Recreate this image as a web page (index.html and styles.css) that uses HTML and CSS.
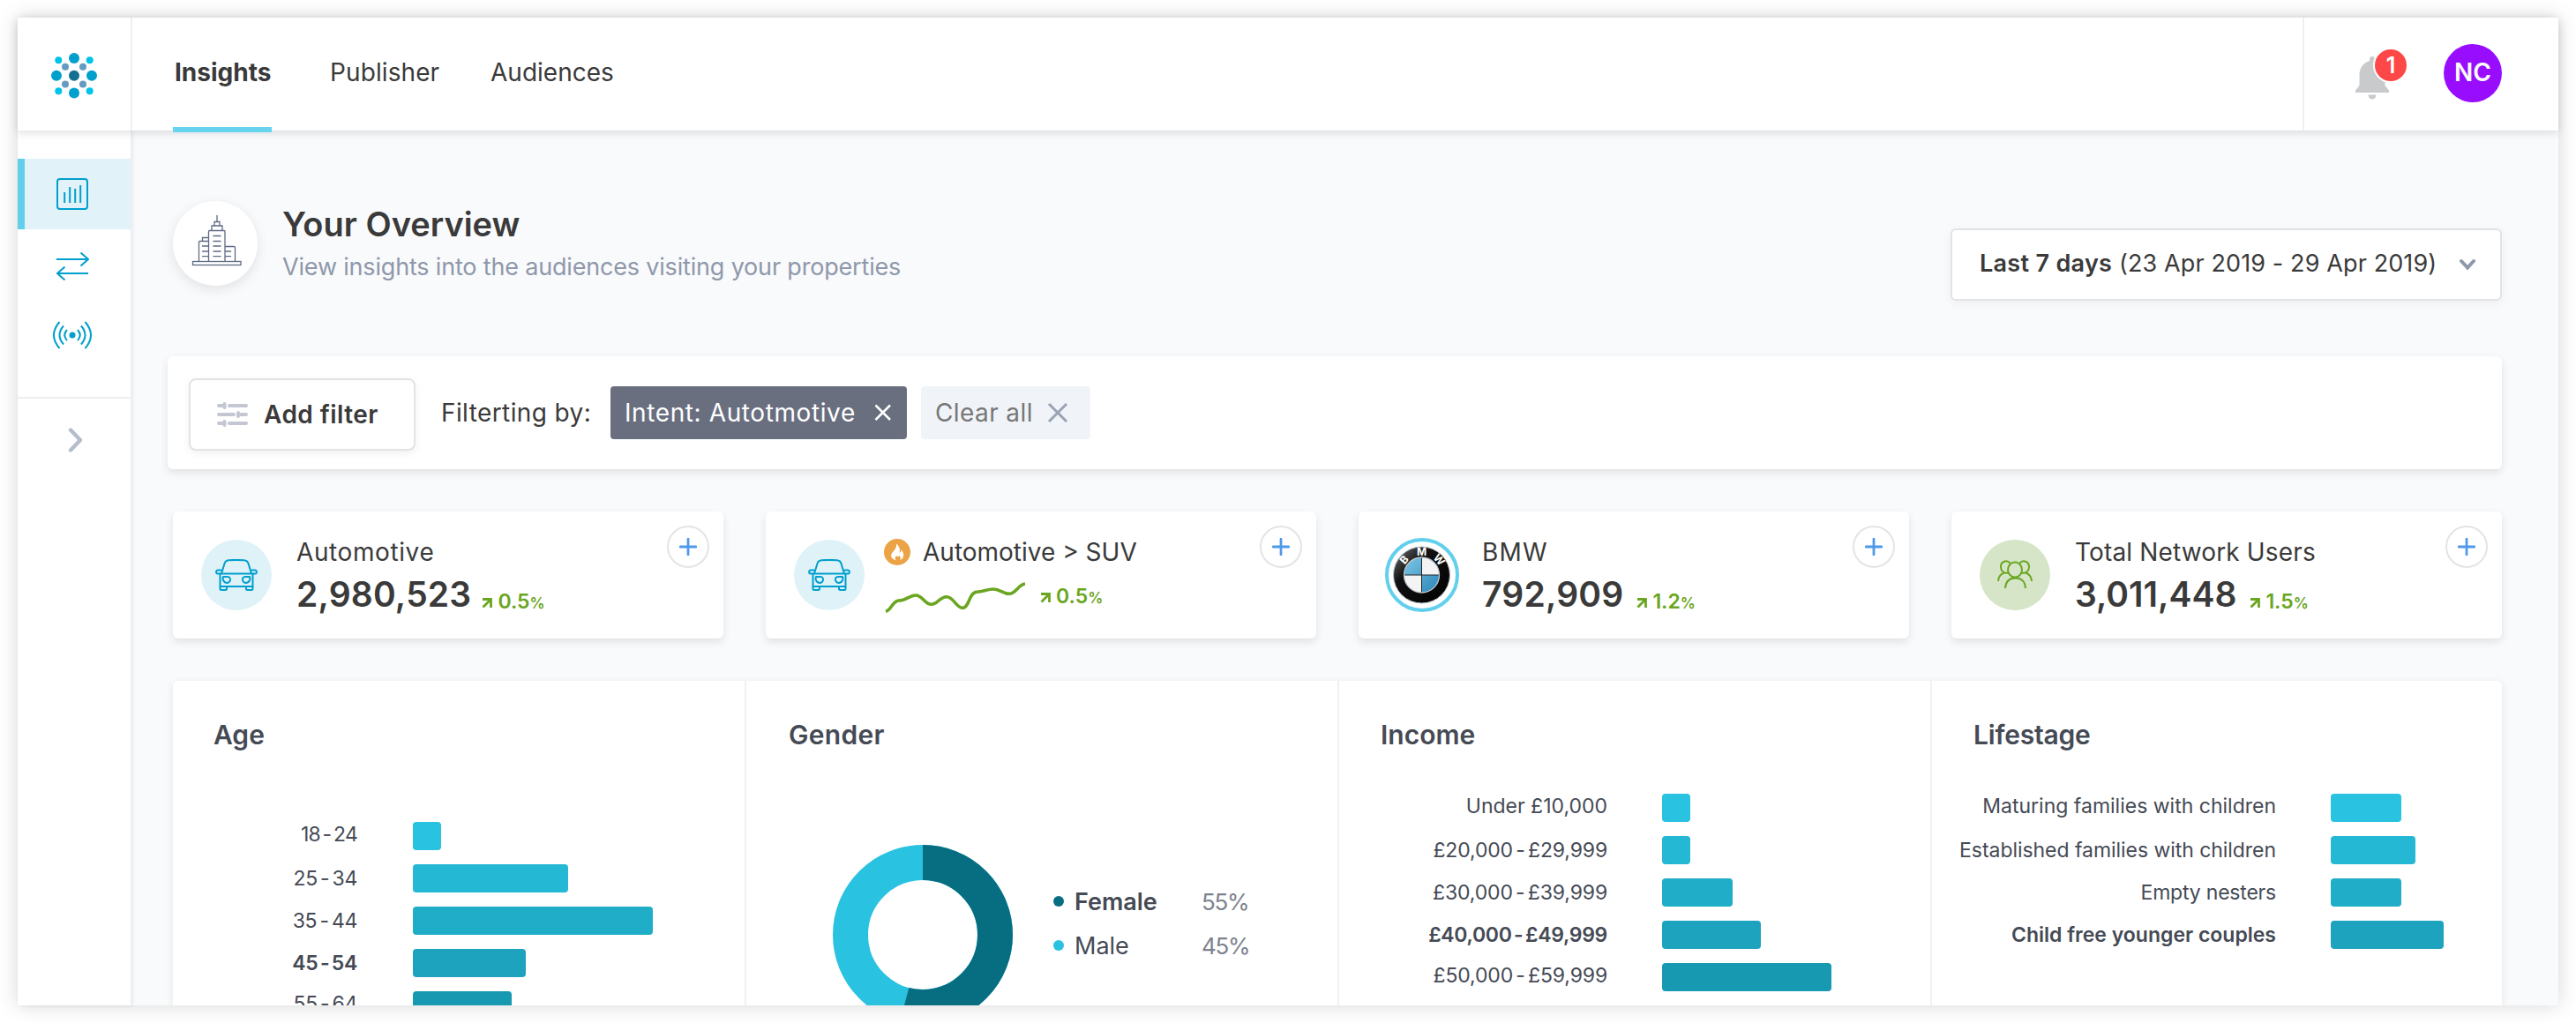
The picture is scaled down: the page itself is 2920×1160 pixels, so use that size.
FILE: index.html
```html
<!DOCTYPE html>
<html lang="en">
<head>
<meta charset="utf-8">
<title>Insights – Your Overview</title>
<link rel="stylesheet" href="styles.css">
</head>
<body>
<svg class="defs" width="0" height="0" aria-hidden="true">
  <symbol id="car" viewBox="0 0 48 36">
    <g fill="none" stroke="#009fce" stroke-width="2" stroke-linejoin="round">
      <path d="M7 16.5 10.5 5C11.3 2.3 13 1.5 15.500 1.300Q24 .6 32.500 1.300C35 1.500 36.700 2.300 37.500 5L41 16.500"/>
      <path d="M5.500 16.500H42.500V31H5.500Z"/>
      <path d="M5.500 16.500H2.500C.6 16.500.6 12.500 3 12.500H7.500M42.500 16.500H45.500C47.400 16.500 47.400 12.500 45 12.500H40.500"/>
      <path d="M5.500 31V33.500Q5.500 35 7 35H11.500Q13 35 13 33.500V31M35 31V33.500Q35 35 36.500 35H41Q42.500 35 42.500 33.500V31"/>
      <path d="M9 20H14Q17.500 20.500 17 24 16 27 13 27 9.500 26.500 8.500 22.500ZM39 20H34Q30.500 20.500 31 24 32 27 35 27 38.500 26.500 39.500 22.500Z"/>
    </g>
  </symbol>
  <symbol id="plus" viewBox="0 0 18 18">
    <path d="M9 1V17M1 9H17" fill="none" stroke="#4f99ea" stroke-width="2.500" stroke-linecap="round"/>
  </symbol>
  <symbol id="rise" viewBox="0 0 12 12">
    <path d="M1 1.500H10.500V11M10 2 1.500 10.500" fill="none" stroke="#6aa621" stroke-width="2.800"/>
  </symbol>
</svg>

<div class="app">
  <header class="header">
    <div class="brand">
      <svg width="52" height="52" viewBox="0 0 52 52">
        <g fill="#00a0cc"><circle cx="26" cy="6" r="6"/><circle cx="26" cy="45.500" r="6"/><circle cx="6" cy="25.700" r="6"/><circle cx="46" cy="25.700" r="6"/></g>
        <g fill="#00c3ea"><circle cx="8.300" cy="8.200" r="4"/><circle cx="43.700" cy="8.200" r="4"/><circle cx="8.300" cy="43.200" r="4"/><circle cx="43.700" cy="43.200" r="4"/></g>
        <g fill="#659bc0"><circle cx="16" cy="15.800" r="4"/><circle cx="36" cy="15.800" r="4"/><circle cx="16" cy="35.500" r="4"/><circle cx="36" cy="35.500" r="4"/></g>
        <circle cx="26" cy="25.700" r="6" fill="#156f92"/>
      </svg>
    </div>
    <nav class="tabs">
      <a class="tab tab--active">Insights</a>
      <a class="tab tab--publisher">Publisher</a>
      <a class="tab tab--audiences">Audiences</a>
    </nav>
    <div class="account">
      <div class="bell">
        <svg width="40" height="50" viewBox="0 0 40 50">
          <path d="M19 0C20.800 0 22 1.200 22 3V5C29 7 33.500 13 33.500 21V33L38 38.500V41H0V38.500L4.500 33V21C4.500 13 9 7 16 5V3C16 1.200 17.200 0 19 0Z" fill="#c8cacc"/>
          <path d="M14.500 43.500H23.500Q23 48.500 19 48.500 15 48.500 14.500 43.500Z" fill="#c8cacc"/>
        </svg>
        <span class="bell__badge">1</span>
      </div>
      <div class="avatar">NC</div>
    </div>
  </header>

  <div class="body">
    <aside class="sidebar">
      <a class="side side--active">
        <svg width="36" height="36" viewBox="0 0 36 36"><g fill="none" stroke="#009fce" stroke-width="2"><rect x="1" y="1" width="34" height="34" rx="3"/><path d="M9.200 16V28M15.200 10V28M21.200 12V28M27.200 8V28"/></g></svg>
      </a>
      <a class="side side--swap">
        <svg width="37" height="32" viewBox="0 0 37 32"><path d="M0 8H36M27.500.5 36 8 27.500 15.500M36 24H1M9.500 16.500 1 24 9.500 31.500" fill="none" stroke="#009fce" stroke-width="2"/></svg>
      </a>
      <a class="side side--signal">
        <svg width="44" height="32" viewBox="0 0 44 32"><g fill="none" stroke="#009fce" stroke-width="2"><path d="M7.500 1Q-5.500 16 7.500 31M12 5.500Q3 16 12 26.500M16 10Q10.500 16 16 22M36.500 1Q49.500 16 36.500 31M32 5.500Q41 16 32 26.500M28 10Q33.500 16 28 22"/></g><circle cx="22" cy="16" r="3.500" fill="#009fce"/></svg>
      </a>
      <a class="side side--expand">
        <svg width="18" height="28" viewBox="0 0 18 28"><path d="M3 2.500 14 14 3 25.500" fill="none" stroke="#b5bccc" stroke-width="4.400" stroke-linecap="round" stroke-linejoin="round"/></svg>
      </a>
    </aside>

    <main class="main">
      <section class="overview">
        <div class="overview__icon">
          <svg width="96" height="96" viewBox="0 0 96 96"><g fill="none" stroke="#5f6b85" stroke-width="1.300">
            <rect x="22.500" y="68.500" width="54.500" height="4"/><path d="M40.500 68.500V34.500Q40.500 33.500 41.500 33.500H58Q59 33.500 59 34.500V68.500M44 33.500V28H56V33.500M47 28V23.500H53V28M50 23.500V16M40.500 45.500H30.500Q29.500 45.500 29.500 46.500V68.500M33.500 45.500V41.500H40.500M59 51.500H69Q70.500 51.500 70.500 53V68.500"/>
            <path d="M45.500 39.500H54.500M45.500 45.500H54.500M45.500 51H54.500M45.500 57H54.500M45.500 62.700H54.500M33 51H40.500M33 57H40.500M33 62.700H40.500M59 57H66M59 62.700H66"/>
          </g></svg>
        </div>
        <div class="overview__text">
          <h1 class="overview__title">Your Overview</h1>
          <p class="overview__sub">View insights into the audiences visiting your properties</p>
        </div>
        <div class="range">
          <span class="range__text"><b>Last 7 days</b> (23 Apr 2019 - 29 Apr 2019)</span>
          <svg width="20" height="14" viewBox="0 0 20 14"><path d="M3 3 10 10.500 17 3" fill="none" stroke="#8f98aa" stroke-width="4" stroke-linecap="round"/></svg>
        </div>
      </section>

      <section class="filters">
        <button class="add">
          <svg width="36" height="28" viewBox="0 0 36 28"><g stroke="#c3c7d3" stroke-width="4" stroke-linecap="round"><path d="M2 4H7M14 4H33M2 14H19M26 14H33M2 24H7M14 24H33"/><path d="M8.500 2V6M24 12V16M8.500 22V26"/></g></svg>
          <span>Add filter</span>
        </button>
        <span class="filters__label">Filterting by:</span>
        <span class="chip chip--dark"><span>Intent: Autotmotive</span>
          <svg width="20" height="20" viewBox="0 0 20 20"><path d="M1.500 1.500 18 18M18 1.500 1.500 18" stroke="#fff" stroke-width="2.500"/></svg></span>
        <span class="chip chip--light"><span>Clear all</span>
          <svg width="24" height="24" viewBox="0 0 24 24"><path d="M2 2 22 22M22 2 2 22" stroke="#9aa3b2" stroke-width="3"/></svg></span>
      </section>

      <section class="cards">
        <article class="card card--auto">
          <div class="card__icon"><svg width="48" height="36"><use href="#car"/></svg></div>
          <div class="card__text">
            <div class="card__name">Automotive</div>
            <div class="card__row"><span class="card__num">2,980,523</span><span class="rise"><svg width="12" height="12"><use href="#rise"/></svg>0.5<small>%</small></span></div>
          </div>
          <span class="plus"><svg width="20" height="20"><use href="#plus"/></svg></span>
        </article>
        <article class="card">
          <div class="card__icon"><svg width="48" height="36"><use href="#car"/></svg></div>
          <div class="card__text card__text--trend">
            <div class="card__name"><svg width="30" height="30" viewBox="0 0 30 30"><circle cx="15" cy="15" r="15" fill="#eba345"/><path d="M14 5.500C18 9 18.500 12 17.500 16Q19.500 15 19.800 12.500C23 16 23.500 22 18.500 24Q19.500 21.500 17.800 19.500 16.500 18.500 16.500 20.500 13.500 18.500 12.800 21 12.500 22.500 13.500 24.300C7.500 22.500 7 18.500 9.500 15.500 12.500 12.500 14.500 9.500 14 5.500Z" fill="#fff"/></svg><span>Automotive &gt; SUV</span></div>
            <div class="trend">
              <svg width="162" height="40" viewBox="0 0 162 40"><path d="M2 36.300C9 34.500 9 24.500 17 24 25 24 29 18 36 18 44 18 46 28.300 53.500 28.300S63 19.700 71 19.700 82 32.300 89 32.300C97 32.300 96 15 105 14.300 113 14 117 11 124 11 132 11 135 16.300 142 16.300 150 16 152 6 160 5" fill="none" stroke="#6aa621" stroke-width="3.600"/></svg>
              <span class="rise"><svg width="12" height="12"><use href="#rise"/></svg>0.5<small>%</small></span>
            </div>
          </div>
          <span class="plus"><svg width="20" height="20"><use href="#plus"/></svg></span>
        </article>
        <article class="card card--bmw">
          <div class="card__icon card__icon--ring">
            <svg width="84" height="84" viewBox="0 0 84 84">
              <defs>
                <linearGradient id="rim" x1="0" y1="0" x2="1" y2="1"><stop offset="0" stop-color="#777"/><stop offset=".35" stop-color="#111"/><stop offset="1" stop-color="#000"/></linearGradient>
                <linearGradient id="blue" x1="0" y1="0" x2="1" y2="1"><stop offset="0" stop-color="#7cc6e6"/><stop offset="1" stop-color="#2b86b8"/></linearGradient>
              </defs>
              <circle cx="42" cy="42" r="40" fill="#fff" stroke="#62d0ec" stroke-width="4"/>
              <circle cx="41.500" cy="42" r="32" fill="url(#rim)" stroke="#b9c0c6" stroke-width="1"/>
              <circle cx="41.500" cy="42" r="20" fill="#f4f4f4"/>
              <path d="M41.500 42V22A20 20 0 0 0 21.500 42ZM41.500 42V62A20 20 0 0 0 61.500 42Z" fill="url(#blue)"/>
              <path d="M41.500 22V62M21.500 42H61.500" stroke="#222" stroke-width="1"/>
              <circle cx="41.500" cy="42" r="20" fill="none" stroke="#bcc5cc" stroke-width="1.300"/>
              <g class="bmw">
                <text x="41.500" y="20">M</text>
                <text x="41.500" y="20" transform="rotate(-49 41.500 42)">B</text>
                <text x="41.500" y="20" transform="rotate(49 41.500 42)">W</text>
              </g>
            </svg>
          </div>
          <div class="card__text">
            <div class="card__name">BMW</div>
            <div class="card__row"><span class="card__num">792,909</span><span class="rise"><svg width="12" height="12"><use href="#rise"/></svg>1.2<small>%</small></span></div>
          </div>
          <span class="plus"><svg width="20" height="20"><use href="#plus"/></svg></span>
        </article>
        <article class="card card--total">
          <div class="card__icon card__icon--green"><svg width="40" height="34" viewBox="0 0 40 34"><g fill="none" stroke="#6aa621" stroke-width="2"><ellipse cx="20" cy="11" rx="8" ry="8.500"/><path d="M9 32C9.500 24.500 13.500 20.500 20.500 20.500S31.500 24.500 32 32M14.500 3.500C11 -.5 4 1.500 4 7.500 4 11.500 6.500 14.500 10 14.800H12.500M25.500 3.500C29 -.5 36 1.500 36 7.500 36 11.500 33.500 14.500 30 14.800H27.500M1 24Q1.500 16.500 8 14.500M39 24Q38.500 16.500 32 14.500"/></g></svg></div>
          <div class="card__text">
            <div class="card__name">Total Network Users</div>
            <div class="card__row"><span class="card__num">3,011,448</span><span class="rise"><svg width="12" height="12"><use href="#rise"/></svg>1.5<small>%</small></span></div>
          </div>
          <span class="plus"><svg width="20" height="20"><use href="#plus"/></svg></span>
        </article>
      </section>

      <section class="charts">
        <div class="chart chart--age">
          <h2>Age</h2>
          <div class="bars">
            <div class="bar bar--first"><span>18 - 24</span><i class="c1" style="width:32px"></i></div>
            <div class="bar"><span>25 - 34</span><i class="c2" style="width:176px"></i></div>
            <div class="bar"><span>35 - 44</span><i class="c3" style="width:272px"></i></div>
            <div class="bar bar--bold"><span>45 - 54</span><i class="c4" style="width:128px"></i></div>
            <div class="bar bar--last"><span>55 - 64</span><i class="c5" style="width:112px"></i></div>
          </div>
        </div>
        <div class="chart chart--gender">
          <h2>Gender</h2>
          <div class="gender">
            <svg width="204" height="204" viewBox="-102 -102 204 204"><g fill="none" stroke-width="40"><circle r="82" stroke="#29c2e0"/><circle r="82" stroke="#076e82" pathLength="1000" stroke-dasharray="541 459" transform="rotate(-90)"/></g></svg>
            <div class="legend">
              <div class="legend__row"><i class="dot dot--f"></i><b>Female</b><em>55%</em></div>
              <div class="legend__row"><i class="dot dot--m"></i><span>Male</span><em>45%</em></div>
            </div>
          </div>
        </div>
        <div class="chart chart--income">
          <h2>Income</h2>
          <div class="bars">
            <div class="bar bar--first"><span>Under £10,000</span><i class="c1" style="width:32px"></i></div>
            <div class="bar"><span>£20,000 - £29,999</span><i class="c2" style="width:32px"></i></div>
            <div class="bar"><span>£30,000 - £39,999</span><i class="c3" style="width:80px"></i></div>
            <div class="bar bar--bold"><span>£40,000 - £49,999</span><i class="c4" style="width:112px"></i></div>
            <div class="bar bar--last"><span>£50,000 - £59,999</span><i class="c5" style="width:192px"></i></div>
          </div>
        </div>
        <div class="chart chart--life">
          <h2>Lifestage</h2>
          <div class="bars">
            <div class="bar bar--first"><span>Maturing families with children</span><i class="c1" style="width:80px"></i></div>
            <div class="bar"><span>Established families with children</span><i class="c2" style="width:96px"></i></div>
            <div class="bar"><span>Empty nesters</span><i class="c3" style="width:80px"></i></div>
            <div class="bar bar--bold"><span>Child free younger couples</span><i class="c4" style="width:128px"></i></div>
          </div>
        </div>
      </section>
    </main>
  </div>
</div>
</body>
</html>
```
FILE: styles.css
```css
* { box-sizing: border-box; }
body { margin: 0; background: #fff; font-family: Inter, "Liberation Sans", sans-serif; color: #3a3a3a; }
svg { display: block; flex: none; }
h1, h2, p { margin: 0; }
.defs { position: absolute; }

.app { margin: 20px; width: 2880px; height: 1120px; display: flex; flex-direction: column; background: #f9fafc; box-shadow: 0 0 22px rgba(0,0,0,.16); }

/* header */
.header { flex: none; height: 128px; display: flex; background: #fff; position: relative; z-index: 2; box-shadow: 0 2px 10px rgba(0,0,0,.14); }
.brand { width: 130px; border-right: 2px solid #f0f0f1; padding: 40px 0 0 38px; }
.tabs { flex: 1; display: flex; padding-left: 46px; }
.tab { height: 124px; line-height: 124px; font-size: 28px; white-space: nowrap; }
.tab--active { height: 130px; width: 112px; padding-left: 2px; font-weight: 700; border-bottom: 6px solid #68d3ee; }
.tab--publisher { margin-left: 66px; width: 182px; letter-spacing: .1px; }
.account { width: 290px; border-left: 2px solid #f0f0f1; display: flex; padding-left: 58px; }
.bell { position: relative; margin-top: 44px; width: 100px; }
.bell__badge { position: absolute; left: 20px; top: -10px; width: 40px; height: 40px; border: 2px solid #fff; border-radius: 50%; background: #fe4747; color: #fff; font-size: 25px; font-weight: 600; line-height: 36px; text-align: center; }
.avatar { margin-top: 30px; width: 66px; height: 66px; border-radius: 50%; background: #990dff; color: #fff; font-size: 28px; font-weight: 600; line-height: 64px; text-align: center; }

.body { flex: 1; min-height: 0; display: flex; }

/* sidebar */
.sidebar { flex: none; width: 128px; background: #fff; padding-top: 32px; box-shadow: 2px 0 5px rgba(0,0,0,.08); }
.side { display: flex; height: 80px; padding-left: 44px; align-items: center; }
.side--active { background: #e1f2f9; border-left: 8px solid #62cfea; padding-left: 36px; }
.side--swap { height: 84px; }
.side--signal { height: 71px; padding-left: 40px; }
.side--expand { margin-top: 35px; height: 95px; border-top: 2px solid #eeeeef; padding-left: 57px; }

/* main */
.main { flex: 1; min-width: 0; display: flex; flex-direction: column; padding: 80px 64px 0 48px; overflow: hidden; }
.overview { display: flex; height: 176px; }
.overview__icon { width: 96px; height: 96px; border-radius: 50%; background: #fff; box-shadow: 0 4px 14px rgba(0,0,0,.1); }
.overview__text { flex: 1; padding: 0 0 0 28px; }
.overview__title { font-size: 38px; font-weight: 600; line-height: 52px; }
.overview__sub { font-size: 27px; line-height: 46px; letter-spacing: -.18px; color: #8f98aa; }
.range { margin-top: 31px; width: 625px; height: 82px; border: 2px solid #e3e3e5; border-radius: 6px; background: #fff; box-shadow: 0 3px 12px rgba(0,0,0,.05); display: flex; justify-content: space-between; align-items: center; padding: 0 27px 0 31px; white-space: nowrap; }
.range__text { font-size: 27px; line-height: 40px; padding-bottom: 2px; letter-spacing: .12px; }
.range b { font-weight: 600; letter-spacing: .3px; }

.filters { margin-left: -6px; height: 128px; display: flex; align-items: flex-start; padding: 25px 24px; border-radius: 6px; background: #fff; box-shadow: 0 4px 10px rgba(0,0,0,.1); white-space: nowrap; }
.add { width: 257px; height: 82px; border: 2px solid #e3e3e5; border-radius: 8px; background: #fff; box-shadow: 0 3px 10px rgba(0,0,0,.06); display: flex; align-items: center; gap: 17px; padding: 0 0 0 30px; font: 600 28px/40px Inter, "Liberation Sans", sans-serif; letter-spacing: .45px; color: #3a3a3a; }
.filters__label { width: 221px; padding-left: 29px; font-size: 28px; line-height: 78px; letter-spacing: .4px; }
.chip { height: 60px; margin-top: 9px; display: flex; align-items: center; border-radius: 4px; font-size: 28px; line-height: 60px; }
.chip--dark { width: 336px; padding: 0 17px 0 16px; justify-content: space-between; background: #696f7f; color: #fff; letter-spacing: .6px; }
.chip--light { width: 192px; margin-left: 16px; padding: 0 25px 0 16px; justify-content: space-between; background: #f0f4f8; color: #777; letter-spacing: .4px; }

.cards { margin-top: 48px; display: grid; grid-template-columns: repeat(4, 624px); gap: 48px; }
.card { position: relative; height: 144px; display: flex; align-items: flex-start; padding: 32px 0 0 32px; background: #fff; border-radius: 6px; box-shadow: 0 4px 10px rgba(0,0,0,.1); }
.card--bmw { padding: 30px 0 0 30px; }
.card__icon { width: 80px; height: 80px; border-radius: 50%; background: #dff2f8; display: flex; align-items: center; justify-content: center; }
.card__icon--green { background: #d6e5c7; }
.card__icon--ring { width: 84px; height: 84px; background: none; }
.card__text { padding-left: 28px; white-space: nowrap; }
.card--bmw .card__text { padding-left: 26px; margin-top: 2px; }
.card__name { display: flex; gap: 14px; font-size: 28px; line-height: 28px; height: 28px; align-items: center; }
.card--auto .card__name { letter-spacing: .6px; }
.card--bmw .card__name { letter-spacing: 1.2px; }
.card--total .card__name { letter-spacing: .15px; }
.card__row { display: flex; align-items: flex-start; gap: 15px; height: 52px; line-height: 68px; }
.card--auto .card__row { gap: 12px; }
.card__num { font-size: 39px; font-weight: 600; }
.card--bmw .card__num, .card--auto .card__num { letter-spacing: .2px; }
.rise { display: flex; align-items: baseline; font-size: 23px; font-weight: 600; line-height: 84px; color: #6aa621; }
.rise svg { margin-right: 6px; }
.rise small { font-size: 17px; }
.card__text--trend { padding-left: 22px; }
.trend { display: flex; align-items: center; gap: 15px; margin-top: 16px; }
.trend .rise { line-height: 40px; }
.plus { position: absolute; right: 16px; top: 16px; width: 48px; height: 48px; border: 2px solid #e4e4e6; border-radius: 50%; display: flex; align-items: center; justify-content: center; }
.bmw { fill: #fff; font-size: 12px; font-weight: 700; text-anchor: middle; }

/* charts */
.charts { margin-top: 48px; height: 368px; flex: none; display: grid; grid-template-columns: 648px 672px 672px 648px; background: #fff; border-radius: 6px 6px 0 0; box-shadow: 0 2px 10px rgba(0,0,0,.09); overflow: hidden; color: #454a55; }
.chart { min-width: 0; border-left: 2px solid #f1f1f3; }
.chart--age { border-left: 0; }
.chart h2 { font-size: 30px; font-weight: 600; line-height: 40px; padding: 41px 0 0 47px; }
.chart--age h2 { padding-left: 46px; }
.chart--gender h2 { padding-left: 48px; letter-spacing: .3px; }
.chart--life h2 { letter-spacing: -.2px; }
.bars { display: flex; flex-direction: column; gap: 16px; padding-top: 47px; }
.chart--age .bars { padding-top: 79px; }
.bar { display: grid; grid-template-columns: 304px auto; column-gap: 62px; height: 32px; justify-content: start; }
.chart--age .bar { grid-template-columns: 209px auto; column-gap: 63px; }
.chart--life .bar { grid-template-columns: 390px auto; column-gap: 62px; }
.bar span { font-size: 23px; line-height: 32px; text-align: right; white-space: nowrap; }
.bar--first span, .bar--last span { line-height: 28px; }
.bar--bold span { font-weight: 600; }
.bar i { height: 32px; border-radius: 4px; }
.chart--age .bar span { word-spacing: -3px; letter-spacing: -.3px; }
.chart--age .bar--first span { letter-spacing: -.8px; }
.chart--income .bar span { word-spacing: -3px; letter-spacing: -.15px; }
.chart--income .bar--first span { word-spacing: 0; letter-spacing: 0; }
.chart--income .bar--bold span { letter-spacing: -.3px; }
.chart--life .bar:nth-child(2) span { letter-spacing: -.05px; }
.chart--life .bar:nth-child(3) span { letter-spacing: -.2px; }
.c1 { background: #29c2e0; }
.c2 { background: #25b8d4; }
.c3 { background: #20adc7; }
.c4 { background: #1ea3bf; }
.c5 { background: #1799b1; }

.gender { display: flex; padding: 105px 0 0 98px; }
.legend { padding: 39px 0 0 46px; }
.legend__row { display: flex; align-items: center; height: 50px; font-size: 27px; }
.legend b, .legend span { width: 144px; font-weight: 600; }
.legend span { font-weight: 400; }
.legend em { font-style: normal; font-size: 26px; letter-spacing: -1.3px; color: #7d838e; }
.dot { width: 12px; height: 12px; border-radius: 50%; margin-right: 12px; }
.dot--f { background: #076e82; }
.dot--m { background: #29c2e0; }
```
